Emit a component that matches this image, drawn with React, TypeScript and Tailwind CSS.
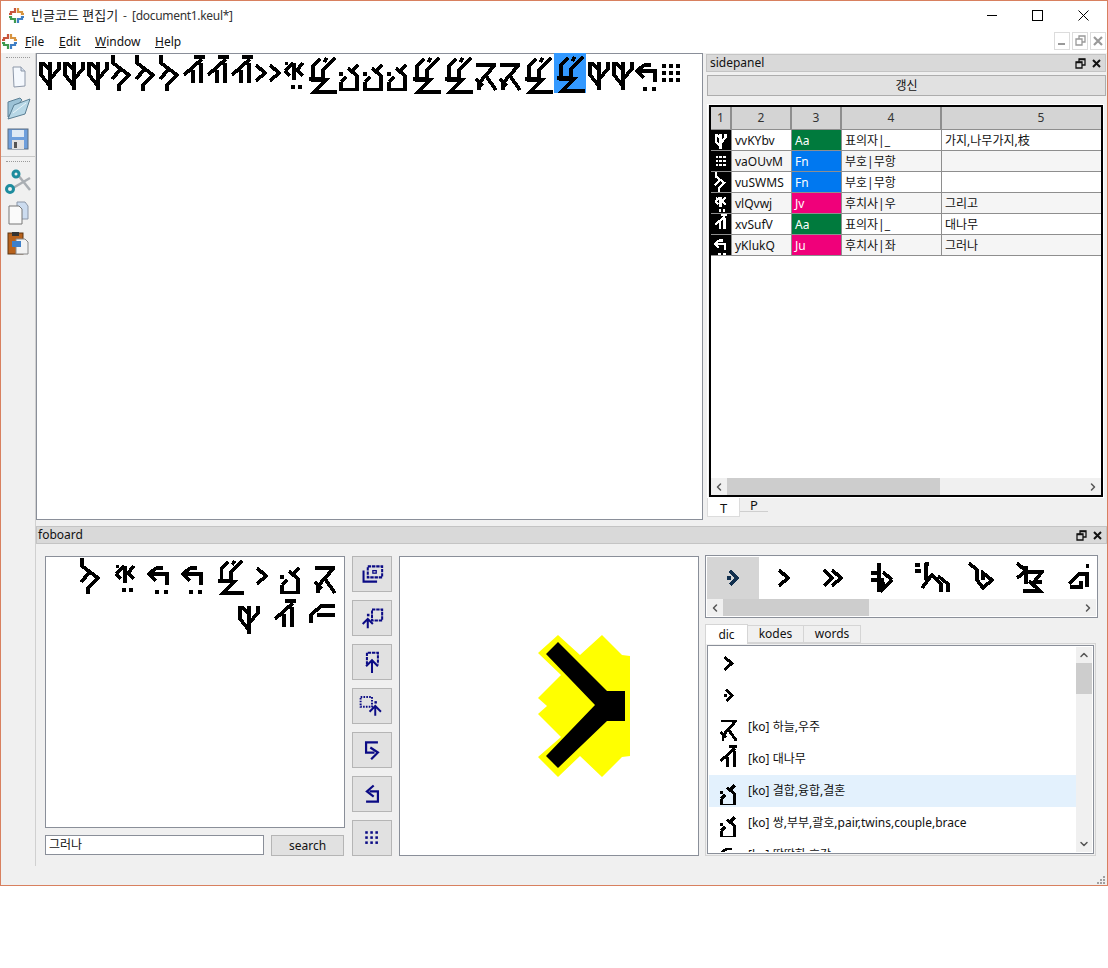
import React from 'react';
import { ChevronLeft, ChevronRight, ChevronUp, ChevronDown } from 'lucide-react';

type Shape = { w: number; h: number; d: string; dots?: number[][] };

// symbols of the keul script, drawn on their own pixel grid
const SHAPES: Record<string, Shape> = {
    a: { w: 24, h: 36, d: 'M3 7V20L12 31 M12 7V35 M12 24L21 14V7 M5 8L12 15' },
    b: { w: 24, h: 36, d: 'M3 0V8L19 20L9 30V36 M2 24L10 15' },
    c: { w: 24, h: 36, d: 'M11 15V28 M19 8V28 M2 20L20 4 M12 2H23' },
    n: { w: 14, h: 36, d: 'M2 10L11 18L2 26' },
    e: { w: 24, h: 36, d: 'M12 8V25 M3 16L11 8 M3 16L8 21 M21 8L15 15L21 21', dots: [[9, 30, 4, 4], [16, 30, 4, 4], [3, 7, 3, 3]] },
    f: { w: 32, h: 40, d: 'M14 4L7 11V24H3 M29 3L17 15V24H7 M21 3L18 7 M5 25H20L8 37H31' },
    g: { w: 24, h: 36, d: 'M20 10L14 16 M10 13L19 21V35H3V27 M3 27L8 22', dots: [[1, 17, 4, 4]] },
    h: { w: 24, h: 36, d: 'M2 10H22 M20 11L5 28V35 M12 21L22 35 M2 24L9 31' },
    i: { w: 24, h: 36, d: 'M9 10H16 M9 10L2 16L9 23 M2 16H20V27', dots: [[8, 32, 4, 4], [17, 32, 4, 4]] },
    j: { w: 24, h: 36, d: '', dots: [0, 1, 2].flatMap((r) => [0, 1, 2].map((c) => [3 + c * 7, 9 + r * 7, 4, 4])) },
    z: { w: 28, h: 36, d: 'M26 7H12L2 16V24 M8 16H26' },
    y: { w: 14, h: 36, d: 'M4 11L11 18L4 25', dots: [[1, 16, 4, 4]] },
    w: { w: 24, h: 36, d: 'M3 10L11 18L3 26 M11 10L20 18L11 26' },
    r: { w: 24, h: 36, d: 'M9 3V32 M1 13H9 M1 20H14 M22 20L13 12 M22 20L13 29V22' },
    s: { w: 38, h: 36, d: 'M3 5H8 M3 11H9 M14 3V20 M19 16L10 28 M19 14L29 24V32 M26 16L36 24V32', dots: [[13, 2, 4, 4]] },
    t: { w: 28, h: 36, d: 'M3 3L11 10V20L17 28L26 20L17 13V20' },
    u: { w: 30, h: 36, d: 'M3 3L12 11L3 18 M12 6V24 M12 12H28L20 22H28 M9 31H26L15 21' },
    v: { w: 22, h: 36, d: 'M2 24L12 14H22 M3 27H14V21 M20 14V27', dots: [[19, 4, 3, 4]] },
};

const Glyph = ({ name, scale = 1, color = '#000', weight = 3.6 }: { name: string; scale?: number; color?: string; weight?: number }) => {
    const s = SHAPES[name];
    return (
        <svg width={s.w * scale} height={s.h * scale} viewBox={`0 0 ${s.w} ${s.h}`} className="shrink-0 block" shapeRendering="crispEdges">
            <path d={s.d} fill="none" stroke={color} strokeWidth={weight} />
            {s.dots?.map((p, i) => <rect key={i} x={p[0]} y={p[1]} width={p[2]} height={p[3]} fill={color} />)}
        </svg>
    );
};

const Logo = () => (
    <svg width="15" height="15" viewBox="0 0 15 15" className="block">
        <path d="M6 0V4H2V6H0" fill="none" stroke="#c8553d" strokeWidth="2.2" />
        <path d="M9 0V4H13V6H15" fill="none" stroke="#d89440" strokeWidth="2.2" />
        <path d="M6 15V11H2V9H0" fill="none" stroke="#3e9a4f" strokeWidth="2.2" />
        <path d="M9 15V11H13V9H15" fill="none" stroke="#3f7fc4" strokeWidth="2.2" />
    </svg>
);

const Hscroll = ({ left, width }: { left: number; width: number }) => (
    <div className="flex h-[17px] items-center bg-[#f0f0f0] text-[#555]">
        <ChevronLeft size={12} strokeWidth={3} className="mx-[2px] shrink-0" />
        <div className="relative h-full flex-1">
            <div className="absolute top-0 h-full bg-[#cdcdcd]" style={{ left, width }} />
        </div>
        <ChevronRight size={12} strokeWidth={3} className="mx-[2px] shrink-0" />
    </div>
);

const DockButtons = () => (
    <div className="flex items-center gap-[5px] pr-[3px]">
        <svg width="11" height="11" viewBox="0 0 11 11" fill="none" stroke="#111" strokeWidth="1.3"><path d="M1 4H7V10H1Z M4 4V1H10V7H7" /><path d="M1 4.5H7 M4 1.5H10" /></svg>
        <svg width="11" height="11" viewBox="0 0 11 11" fill="none" stroke="#111" strokeWidth="2"><path d="M2 2L9 9 M9 2L2 9" /></svg>
    </div>
);

const MdiIcons = [
    <svg width="10" height="10" viewBox="0 0 10 10" fill="none" stroke="#999" strokeWidth="2"><path d="M1 8H8" /></svg>,
    <svg width="11" height="11" viewBox="0 0 11 11" fill="none" stroke="#999" strokeWidth="1.3"><path d="M1 4H7V10H1Z M4 4V1H10V7H7" /></svg>,
    <svg width="10" height="10" viewBox="0 0 10 10" fill="none" stroke="#999" strokeWidth="2.2"><path d="M1 1L9 9 M9 1L1 9" /></svg>,
];

const ToolIcons = [
    <svg width="100%" height="100%" viewBox="0 0 26 26" fill="none" stroke="#0b0b85" strokeWidth="2.4"><path d="M8 4H25V17H8Z" strokeDasharray="4 1" /><path d="M3 9V22H19" /><rect x="14" y="9" width="4" height="3" strokeWidth="1.5" /></svg>,
    <svg width="100%" height="100%" viewBox="0 0 26 26" fill="none" stroke="#0b0b85" strokeWidth="2.4"><path d="M13 3H25V16H13Z" strokeDasharray="4 1" /><path d="M8 14V25 M2 20L8 14L14 20" /><rect x="7" y="8" width="3" height="3" fill="#0b0b85" stroke="none" /></svg>,
    <svg width="100%" height="100%" viewBox="0 0 26 26" fill="none" stroke="#0b0b85" strokeWidth="2.4"><path d="M7 16V2H20V16" strokeDasharray="4 1" /><path d="M13 10V26 M6 18L13 11L20 18" /></svg>,
    <svg width="100%" height="100%" viewBox="0 0 32 26" fill="none" stroke="#0b0b85" strokeWidth="2.4"><path d="M2 2H16V14H2Z" strokeDasharray="2 1.5" /><path d="M20 13V25 M13 20L20 13L27 20" /><rect x="19" y="7" width="3" height="3" fill="#0b0b85" stroke="none" /></svg>,
    <svg width="100%" height="100%" viewBox="0 0 26 26" fill="none" stroke="#0b0b85" strokeWidth="2.6"><path d="M20 4H6V16H16" /><path d="M11 10L20 16L12 24" /></svg>,
    <svg width="100%" height="100%" viewBox="0 0 26 26" fill="none" stroke="#0b0b85" strokeWidth="2.6"><path d="M6 22H20V10H10" /><path d="M15 3L7 10L15 16" /></svg>,
    <svg width="100%" height="100%" viewBox="0 0 26 26" fill="#0b0b85"><rect x="5" y="5" width="3" height="3" /><rect x="11" y="5" width="3" height="3" /><rect x="17" y="5" width="3" height="3" /><rect x="5" y="11" width="3" height="3" /><rect x="11" y="11" width="3" height="3" /><rect x="17" y="11" width="3" height="3" /><rect x="5" y="17" width="3" height="3" /><rect x="11" y="17" width="3" height="3" /><rect x="17" y="17" width="3" height="3" /></svg>,
];

const FileIcons = [
    [
        <svg width="24" height="24" viewBox="0 0 24 24"><path d="M7 2H15L19 6V21L8 22Z" fill="#f4f8fd" stroke="#8c97a8" /><path d="M15 2V6H19" fill="#d5dfec" stroke="#8c97a8" /></svg>,
        <svg width="26" height="26" viewBox="0 0 26 26"><path d="M3 7L15 3L17 5L3 22Z" fill="#9cc2d6" stroke="#5b7f94" /><path d="M3 24L9 10L25 4L20 19Z" fill="#b7d7e6" stroke="#5b7f94" /><path d="M8 18L21 8" stroke="#e8f3f8" /></svg>,
        <svg width="24" height="24" viewBox="0 0 24 24"><rect x="2" y="2" width="20" height="20" fill="#6f9fdc" stroke="#5a6c80" /><rect x="6" y="3" width="12" height="7" fill="#dfe9f4" /><rect x="6" y="13" width="12" height="9" fill="#e2e2e2" /><rect x="8" y="15" width="3" height="6" fill="#555" /></svg>,
    ],
    [
        <svg width="26" height="26" viewBox="0 0 26 26" fill="none"><path d="M8 19L25 9" stroke="#a9aeb3" strokeWidth="2.5" /><path d="M13 6L25 21" stroke="#a9aeb3" strokeWidth="2.5" /><circle cx="11" cy="5" r="3" stroke="#1d8c9e" strokeWidth="3" /><circle cx="5" cy="20" r="3.5" stroke="#1d8c9e" strokeWidth="3" /></svg>,
        <svg width="24" height="24" viewBox="0 0 24 24"><path d="M11 1H19L22 5V18H11Z" fill="#ccdcf0" stroke="#8c97a8" /><path d="M3 5H13L16 8V23H3Z" fill="#fafafa" stroke="#777" /></svg>,
        <svg width="24" height="24" viewBox="0 0 24 24"><rect x="2" y="2" width="15" height="21" fill="#b8621c" stroke="#5c3510" /><rect x="6" y="1" width="7" height="4" fill="#333" /><path d="M10 8H19L22 11V23H10Z" fill="#f2f2f2" stroke="#888" /><rect x="6" y="10" width="9" height="6" fill="#3d7fc9" /></svg>,
    ],
];

const ROWS = [
    { glyph: 'a', code: 'vvKYbv', kind: 'Aa', pos: '표의자|_', text: '가지,나무가지,枝', color: 'bg-[#007a3d]' },
    { glyph: 'j', code: 'vaOUvM', kind: 'Fn', pos: '부호|무항', text: '', color: 'bg-[#0078f0]' },
    { glyph: 'b', code: 'vuSWMS', kind: 'Fn', pos: '부호|무항', text: '', color: 'bg-[#0078f0]' },
    { glyph: 'e', code: 'vlQvwj', kind: 'Jv', pos: '후치사|우', text: '그리고', color: 'bg-[#f0007a]' },
    { glyph: 'c', code: 'xvSufV', kind: 'Aa', pos: '표의자|_', text: '대나무', color: 'bg-[#007a3d]' },
    { glyph: 'i', code: 'yKlukQ', kind: 'Ju', pos: '후치사|좌', text: '그러나', color: 'bg-[#f0007a]' },
];

const SEQUENCE = ['a', 'a', 'a', 'b', 'b', 'b', 'c', 'c', 'c', 'n', 'n', 'e', 'f', 'g', 'g', 'g', 'f', 'f', 'h', 'h', 'f'];

const DIC = [
    { glyph: 'n', text: '' },
    { glyph: 'y', text: '' },
    { glyph: 'h', text: '[ko] 하늘,우주' },
    { glyph: 'c', text: '[ko] 대나무' },
    { glyph: 'g', text: '[ko] 결합,융합,결혼', active: true },
    { glyph: 'g', text: '[ko] 쌍,부부,괄호,pair,twins,couple,brace' },
];

export default function App() {
    return (
        <div className="w-[1108px] h-[968px] bg-white text-[12px] leading-none text-[#111] font-['Noto_Sans','Noto_Sans_CJK_KR',sans-serif]">
            <div className="flex h-[886px] flex-col border border-[#d8805f] bg-[#f0f0f0]">
                {/* title bar */}
                <div className="flex h-[29px] items-center bg-white pl-[8px]">
                    <Logo />
                    <span className="ml-[7px] text-[13px] text-[#222]">빈글코드 편집기</span>
                    <span className="ml-[5px] text-[#444]">-</span>
                    <span className="ml-[5px] text-[12px] tracking-[-0.3px] text-[#333]">[document1.keul*]</span>
                    <div className="ml-auto flex items-center">
                        <div className="h-px w-[10px] bg-black mr-[35px]" />
                        <div className="size-[11px] border border-black mr-[35px]" />
                        <svg width="11" height="11" viewBox="0 0 11 11" className="mr-[18px]" stroke="#000"><path d="M0.5 0.5L10.5 10.5 M10.5 0.5L0.5 10.5" /></svg>
                    </div>
                </div>

                {/* menu bar */}
                <div className="flex h-[23px] items-center bg-white pl-px">
                    <Logo />
                    <span className="ml-[8px] w-[34px]"><u>F</u>ile</span>
                    <span className="w-[36px]"><u>E</u>dit</span>
                    <span className="w-[60px]"><u>W</u>indow</span>
                    <span><u>H</u>elp</span>
                    <div className="ml-auto flex gap-[2px] pr-[1px] pb-[2px]">
                        {MdiIcons.map((icon, i) => (
                            <div key={i} className="flex h-[18px] w-[16px] items-center justify-center border border-[#dcdcdc]">{icon}</div>
                        ))}
                    </div>
                </div>

                <div className="flex h-[813px]">
                    {/* left toolbar */}
                    <div className="w-[35px] shrink-0 border-r border-[#d0d0d0]">
                        {FileIcons.map((group, g) => (
                            <div key={g} className={g === 0 ? 'border-b border-[#c8c8c8] h-[100px]' : ''}>
                                <div className="mx-[5px] mt-[4px] h-px border-t border-dotted border-[#999]" />
                                <div className="mt-[7px] flex flex-col items-center gap-[6px]">{group}</div>
                            </div>
                        ))}
                    </div>

                    <div className="flex min-w-0 flex-1 flex-col">
                        <div className="flex h-[467px]">
                            {/* editor */}
                            <div className="h-[467px] w-[667px] shrink-0 border border-[#8a8f99] bg-white">
                                <div className="flex items-start pl-px pt-[1px]">
                                    {SEQUENCE.map((g, i) => <Glyph key={i} name={g} />)}
                                    <div className="-mt-[2px] h-[40px] overflow-hidden bg-[#3399ff] pt-px"><Glyph name="f" /></div>
                                    <div className="w-px" />
                                    {['a', 'a', 'i', 'j'].map((g, i) => <Glyph key={i} name={g} />)}
                                </div>
                            </div>

                            {/* sidepanel */}
                            <div className="ml-[3px] flex w-[400px] flex-col pt-px">
                                <div className="flex h-[18px] items-center justify-between border border-[#c4c4c4] bg-[#d9d9d9] pl-[3px]">
                                    <span>sidepanel</span>
                                    <DockButtons />
                                </div>
                                <div className="ml-px mt-[3px] flex h-[21px] items-center justify-center border border-[#adadad] bg-[#e1e1e1]">갱신</div>
                                <div className="ml-px mt-[8px] h-[394px] w-[397px] border border-white">
                                    <div className="ml-px flex h-full w-[394px] flex-col border-2 border-black bg-white">
                                        <div className="grid h-[23px] grid-cols-[21px_60px_50px_100px_1fr] overflow-hidden bg-[#d4d4d4] text-center leading-[22px] text-[#333]">
                                            {[1, 2, 3, 4].map((n) => <div key={n} className="border-r-2 border-b-2 border-[#8e8e8e]">{n}</div>)}
                                            <div className="border-b-2 border-[#8e8e8e] pl-[39px]">5</div>
                                        </div>
                                        {ROWS.map((row, i) => (
                                            <div key={row.code} className={`grid h-[21px] shrink-0 grid-cols-[21px_60px_50px_100px_1fr] grid-rows-[20px] overflow-hidden border-b border-[#8e8e8e] leading-[21px] ${i % 2 ? 'bg-[#f5f5f5]' : 'bg-white'}`}>
                                                <div className="flex items-center justify-center overflow-hidden border-r border-[#8e8e8e] bg-black"><Glyph name={row.glyph} scale={0.55} color="#fff" weight={4} /></div>
                                                <div className="border-r border-[#8e8e8e] pl-[3px]">{row.code}</div>
                                                <div className={`border-r border-[#8e8e8e] pl-[3px] text-white ${row.color}`}>{row.kind}</div>
                                                <div className="border-r border-[#8e8e8e] pl-[3px]">{row.pos}</div>
                                                <div className="pl-[3px]">{row.text}</div>
                                            </div>
                                        ))}
                                        <div className="flex-1" />
                                        <Hscroll left={0} width={213} />
                                    </div>
                                </div>
                                <div className="ml-px flex items-start text-center">
                                    <div className="h-[19px] w-[33px] border border-t-0 border-[#dcdcdc] bg-white pt-[4px] text-[13px]">T</div>
                                    <div className="h-[14px] w-[28px] border-b border-[#cfcfcf] pt-px text-[13px]">P</div>
                                </div>
                            </div>
                        </div>

                        {/* foboard */}
                        <div className="mt-[6px] flex h-[18px] items-center justify-between border border-[#c4c4c4] bg-[#d9d9d9] pl-[1px]">
                            <span>foboard</span>
                            <DockButtons />
                        </div>
                        <div className="flex pl-[9px] pt-[12px]">
                            <div className="w-[300px]">
                                <div className="flex h-[272px] flex-col border border-[#8a8f99] bg-white pt-px pr-[7px]">
                                    <div className="flex justify-end gap-[10px]">
                                        {['b', 'e', 'i', 'i', 'f', 'n', 'g', 'h'].map((g, i) => <Glyph key={i} name={g} scale={g === 'f' ? 0.95 : 1} />)}
                                    </div>
                                    <div className="mt-[3px] flex justify-end gap-[12px]">
                                        {['a', 'c', 'z'].map((g, i) => <Glyph key={i} name={g} />)}
                                    </div>
                                </div>
                                <div className="mt-[7px] flex gap-[7px]">
                                    <div className="flex h-[20px] w-[219px] items-center border border-[#8a8f99] bg-white pl-[3px]">그러나</div>
                                    <div className="flex h-[21px] w-[73px] items-center justify-center border border-[#b5b5b5] bg-[#e1e1e1]">search</div>
                                </div>
                            </div>

                            <div className="ml-[7px] flex w-[40px] shrink-0 flex-col gap-[8px]">
                                {ToolIcons.map((icon, i) => (
                                    <div key={i} className="flex h-[36px] items-center justify-center border border-[#b5b5b5] bg-[#e1e1e1] p-[6px]">{icon}</div>
                                ))}
                            </div>

                            <div className="ml-[7px] size-[300px] shrink-0 border border-[#8a8f99] bg-white">
                                <svg width="298" height="298" viewBox="400 557 298 298" className="block">
                                    <polygon fill="#ffff00" points="558,635 538,653 561,675 538,698 547,706 538,714 561,737 538,757 558,777 580,756 602,777 622,757 630,756 630,656 622,655 602,635 580,655" />
                                    <polygon fill="#000" points="558,642 546,654 595,705 546,756 558,768 607,721 625,721 625,691 607,691" />
                                </svg>
                            </div>

                            <div className="ml-[6px] -mt-px w-[393px] shrink-0">
                                <div className="border border-[#8a8f99] bg-white p-px">
                                    <div className="flex h-[42px] overflow-hidden">
                                        <div className="flex w-[52px] shrink-0 items-center justify-center bg-[#d5d5d5]"><Glyph name="y" color="#12304f" /></div>
                                        {['n', 'w', 'r', 's', 't', 'u', 'v'].map((g, i) => (
                                            <div key={i} className="flex w-[49px] shrink-0 items-center justify-center"><Glyph name={g} /></div>
                                        ))}
                                    </div>
                                    <Hscroll left={0} width={146} />
                                </div>
                                <div className="mt-[6px] flex items-end">
                                    <div className="z-10 -mb-px flex h-[20px] w-[43px] items-center justify-center border border-b-0 border-[#d5d5d5] bg-white">dic</div>
                                    <div className="flex h-[18px] w-[56px] items-center justify-center border border-l-0 border-[#d5d5d5]">kodes</div>
                                    <div className="flex h-[18px] w-[57px] items-center justify-center border border-l-0 border-[#d5d5d5]">words</div>
                                </div>
                                <div className="h-[213px] w-[391px] border border-[#d5d5d5] p-px">
                                    <div className="flex h-[209px] w-[387px] border border-[#8a8f99] bg-white p-px">
                                        <div className="flex-1 overflow-hidden">
                                            {DIC.map((item, i) => (
                                                <div key={i} className={`flex h-[32px] items-center ${item.active ? 'bg-[#e3f1fd]' : ''}`}>
                                                    <div className="flex w-[39px] shrink-0 justify-center"><Glyph name={item.glyph} scale={0.8} /></div>
                                                    <span>{item.text}</span>
                                                </div>
                                            ))}
                                            <div className="flex h-[32px] items-center">
                                                <div className="flex w-[39px] shrink-0 justify-center"><Glyph name="i" scale={0.8} /></div>
                                                <span>[ko] 딱딱한 호감</span>
                                            </div>
                                        </div>
                                        <div className="flex w-[16px] shrink-0 flex-col items-center bg-[#f0f0f0] text-[#555]">
                                            <ChevronUp size={12} strokeWidth={3} className="my-[2px]" />
                                            <div className="h-[31px] w-full bg-[#cdcdcd]" />
                                            <div className="flex-1" />
                                            <ChevronDown size={12} strokeWidth={3} className="my-[2px]" />
                                        </div>
                                    </div>
                                </div>
                            </div>
                        </div>
                    </div>
                </div>

                {/* status bar with size grip */}
                <div className="flex h-[19px] items-end justify-end pb-px pr-[2px]">
                    <svg width="8" height="8" viewBox="0 0 8 8" fill="#a0a0a0"><rect x="6" y="0" width="2" height="2" /><rect x="3" y="3" width="2" height="2" /><rect x="6" y="3" width="2" height="2" /><rect x="0" y="6" width="2" height="2" /><rect x="3" y="6" width="2" height="2" /><rect x="6" y="6" width="2" height="2" /></svg>
                </div>
            </div>
        </div>
    );
}
